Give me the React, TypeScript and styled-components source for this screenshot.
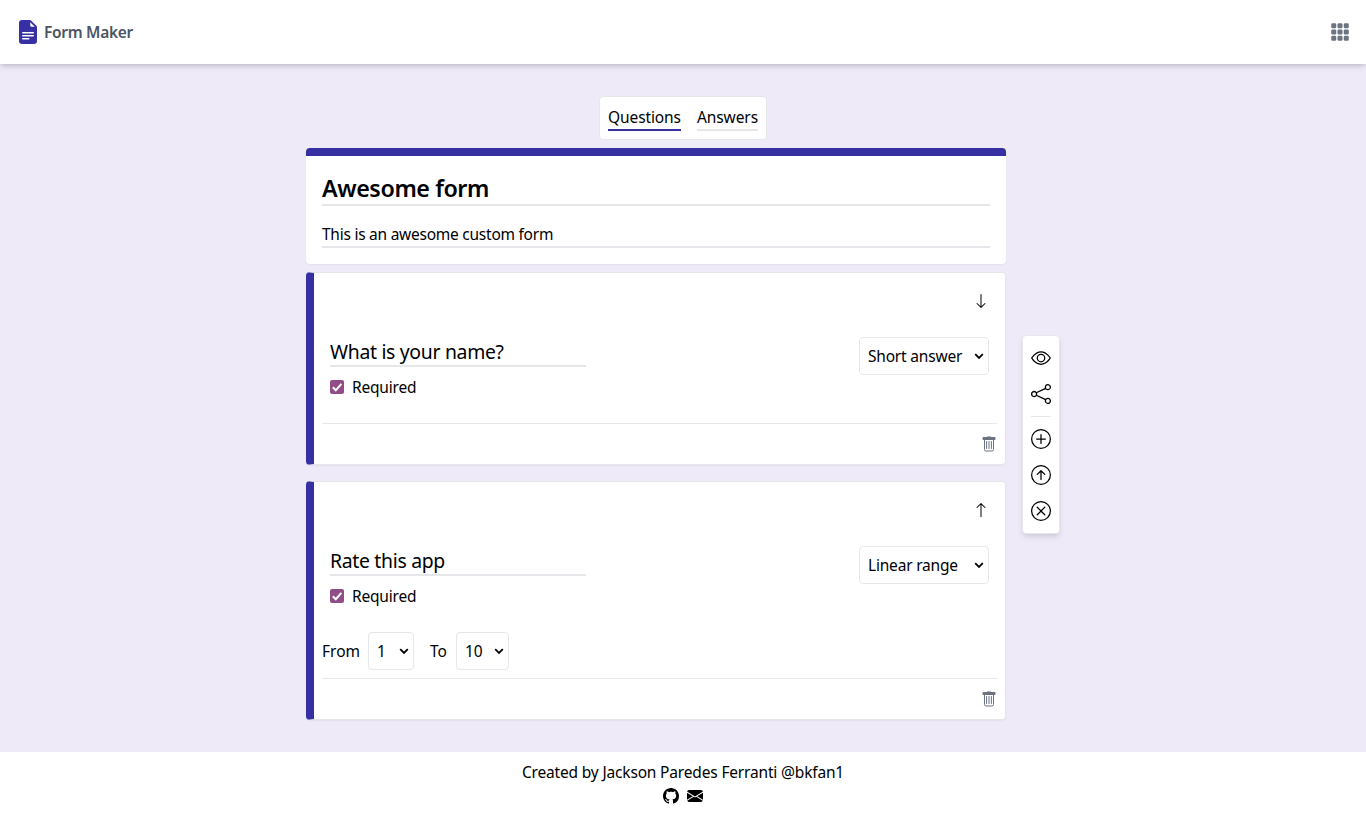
import React from "react";
import styled, { createGlobalStyle } from "styled-components";
import {
  BsArrowDown,
  BsArrowUp,
  BsArrowUpCircle,
  BsEnvelopeFill,
  BsEye,
  BsFileEarmarkTextFill,
  BsGithub,
  BsGrid3X3GapFill,
  BsPlusCircle,
  BsShare,
  BsXCircle,
} from "react-icons/bs";

const indigo = "#3730a3";
const line = "#e5e7eb";
const gray = "#6b7280";

const GlobalStyle = createGlobalStyle`
  *, *::before, *::after { box-sizing: border-box; }
  body {
    margin: 0;
    font-family: "Noto Sans", "Open Sans", sans-serif;
    font-size: 15.5px;
    line-height: 24px;
    color: #000;
    background: #fff;
  }
  h1, h2, p { margin: 0; font-size: inherit; font-weight: inherit; }
  svg { display: block; flex-shrink: 0; }
`;

const Page = styled.div`
  display: flex;
  flex-direction: column;
  min-height: 816px;
`;

const Header = styled.header`
  position: relative;
  display: flex;
  align-items: center;
  justify-content: space-between;
  height: 64px;
  padding: 0 16px;
  background: #fff;
  color: ${gray};
  box-shadow: 0 4px 6px -1px rgba(0, 0, 0, 0.1), 0 2px 4px -1px rgba(0, 0, 0, 0.12);
`;

const Brand = styled.div`
  display: flex;
  align-items: center;
  gap: 4px;
  color: ${indigo};
`;

const Text = styled.span<{ $tracking?: number }>`
  letter-spacing: ${(p) => p.$tracking ?? -0.2}px;
  white-space: nowrap;
`;

const BrandName = styled(Text)`
  font-weight: 600;
  color: #4b5563;
`;

const Main = styled.main`
  flex: 1;
  display: flex;
  flex-direction: column;
  align-items: center;
  gap: 8px;
  padding: 32px 0;
  background: #eeeaf8;
`;

const Tabs = styled.nav`
  display: flex;
  gap: 16px;
  padding: 8px;
  background: #fff;
  border: 1px solid ${line};
  border-radius: 4px;
`;

const Tab = styled.div<{ $active?: boolean; $width: number }>`
  width: ${(p) => p.$width}px;
  border-bottom: 2px solid ${(p) => (p.$active ? indigo : line)};
`;

const Workspace = styled.div`
  display: flex;
  align-items: center;
  gap: 16px;
`;

const FormColumn = styled.div`
  display: flex;
  flex-direction: column;
  width: 700px;
`;

const TitleCard = styled.section`
  display: flex;
  flex-direction: column;
  gap: 16px;
  padding: 16px;
  margin-bottom: 8px;
  background: #fff;
  border-top: 8px solid ${indigo};
  border-radius: 4px;
  box-shadow: 0 1px 2px rgba(0, 0, 0, 0.05);
`;

const FormTitle = styled.h1`
  padding-top: 1px;
  border-bottom: 2px solid ${line};
  font-size: 23.3px;
  line-height: 31px;
  font-weight: 600;
`;

const FormDescription = styled.p`
  border-bottom: 2px solid ${line};
`;

const QuestionCard = styled.section`
  padding: 8px;
  background: #fff;
  border: 1px solid ${line};
  border-left: 8px solid ${indigo};
  border-radius: 4px;
  box-shadow: 0 1px 2px rgba(0, 0, 0, 0.05);

  & + & {
    margin-top: 16px;
  }
`;

const QuestionBody = styled.div`
  display: flex;
  flex-direction: column;
  padding: 8px;
`;

const MoveRow = styled.div`
  display: flex;
  align-items: center;
  justify-content: flex-end;
  height: 24px;
  margin-bottom: 24px;
`;

const QuestionRow = styled.div`
  display: flex;
  align-items: flex-start;
  justify-content: space-between;
`;

const QuestionName = styled.h2`
  width: 256px;
  padding-top: 2px;
  border-bottom: 2px solid ${line};
  font-size: 19.4px;
  line-height: 26px;
`;

const SelectBox = styled.div<{ $width: number }>`
  display: grid;
  align-items: center;
  width: ${(p) => p.$width}px;
  height: 38px;

  & > * {
    grid-area: 1 / 1;
  }
`;

const NativeSelect = styled.select`
  appearance: none;
  width: 100%;
  height: 100%;
  margin: 0;
  padding: 0 8px;
  border: 1px solid ${line};
  border-radius: 4px;
  background: #fff;
  color: #000;
  font-family: inherit;
  font-size: inherit;
  letter-spacing: -0.2px;
`;

const Chevron = styled.svg`
  justify-self: end;
  margin-right: 5px;
  pointer-events: none;
`;

const RequiredLabel = styled.label`
  display: flex;
  align-items: center;
  gap: 8px;
`;

const CheckMark = styled.svg`
  border-radius: 2px;
  background: #914d88;
`;

const AnswerArea = styled.div`
  display: flex;
  align-items: center;
  gap: 16px;
  padding-top: 16px;
`;

const RangeField = styled.label`
  display: flex;
  align-items: center;
  gap: 8px;
  padding-bottom: 8px;
`;

const RangeName = styled(Text)<{ $width: number }>`
  width: ${(p) => p.$width}px;
`;

const CardFooter = styled.div`
  display: flex;
  align-items: center;
  justify-content: flex-end;
  height: 33px;
  padding-top: 8px;
  border-top: 1px solid ${line};
  color: ${gray};
`;

const Toolbar = styled.aside`
  display: flex;
  flex-direction: column;
  padding: 4px 0;
  margin-top: 1px;
  background: #fff;
  border: 1px solid ${line};
  border-radius: 4px;
  box-shadow: 0 4px 6px -1px rgba(0, 0, 0, 0.1), 0 2px 4px -1px rgba(0, 0, 0, 0.06);
`;

const Tool = styled.div`
  padding: 8px;
`;

const Divider = styled.div`
  height: 1px;
  margin: 4px 8px;
  background: ${line};
`;

const Footer = styled.footer`
  display: flex;
  flex-direction: column;
  align-items: center;
  height: 64px;
  padding: 8px;
`;

const FooterLinks = styled.div`
  display: flex;
  align-items: center;
  gap: 8px;
  height: 24px;
`;

function TrashIcon() {
  return (
    <svg width="16" height="16" viewBox="0 0 16 16" fill="none" stroke="currentColor">
      <path d="M6 .5h4V1h3.5a1 1 0 0 1 1 1v1a1 1 0 0 1-1 1h-11a1 1 0 0 1-1-1V2a1 1 0 0 1 1-1H6z" fill="currentColor" stroke="none" />
      <path d="M3.5 4v9.5A1.5 1.5 0 0 0 5 15h6a1.5 1.5 0 0 0 1.5-1.5V4" />
      <path d="M5.6 5.5v7M8 5.5v7M10.4 5.5v7" strokeLinecap="round" />
    </svg>
  );
}

function Select({ value, width }: { value: string; width: number }) {
  return (
    <SelectBox $width={width}>
      <NativeSelect defaultValue={value}>
        <option>{value}</option>
      </NativeSelect>
      <Chevron width="10" height="8" viewBox="0 0 10 8" fill="none" stroke="#000" strokeWidth="1.8">
        <path d="M1.2 2.2 5 6l3.8-3.8" />
      </Chevron>
    </SelectBox>
  );
}

type QuestionProps = {
  name: string;
  type: string;
  move: React.ReactNode;
  children?: React.ReactNode;
};

function Question({ name, type, move, children }: QuestionProps) {
  return (
    <QuestionCard>
      <QuestionBody>
        <MoveRow>{move}</MoveRow>
        <QuestionRow>
          <QuestionName>
            <Text $tracking={-0.31}>{name}</Text>
          </QuestionName>
          <Select width={130} value={type} />
        </QuestionRow>
        <RequiredLabel>
          <CheckMark width="14" height="14" viewBox="0 0 14 14" fill="none" stroke="#fff" strokeWidth="2">
            <path d="m2.8 7.2 3 3L11.4 3.8" />
          </CheckMark>
          <Text>Required</Text>
        </RequiredLabel>
      </QuestionBody>
      <AnswerArea>{children}</AnswerArea>
      <CardFooter>
        <TrashIcon />
      </CardFooter>
    </QuestionCard>
  );
}

export default function App() {
  return (
    <Page>
      <GlobalStyle />
      <Header>
        <Brand>
          <BsFileEarmarkTextFill size={24} />
          <BrandName $tracking={-0.3}>Form Maker</BrandName>
        </Brand>
        <BsGrid3X3GapFill size={20} />
      </Header>
      <Main>
        <Tabs>
          <Tab $active $width={73}>
            <Text $tracking={-0.1}>Questions</Text>
          </Tab>
          <Tab $width={61}>
            <Text $tracking={-0.1}>Answers</Text>
          </Tab>
        </Tabs>
        <Workspace>
          <FormColumn>
            <TitleCard>
              <FormTitle>
                <Text $tracking={-0.42}>Awesome form</Text>
              </FormTitle>
              <FormDescription>
                <Text $tracking={-0.25}>This is an awesome custom form</Text>
              </FormDescription>
            </TitleCard>
            <Question name="What is your name?" type="Short answer" move={<BsArrowDown size={16} />} />
            <Question name="Rate this app" type="Linear range" move={<BsArrowUp size={16} />}>
              <RangeField>
                <RangeName $width={38} $tracking={0}>From</RangeName>
                <Select width={46} value="1" />
              </RangeField>
              <RangeField>
                <RangeName $width={18} $tracking={0}>To</RangeName>
                <Select width={53} value="10" />
              </RangeField>
            </Question>
          </FormColumn>
          <Toolbar>
            <Tool><BsEye size={20} /></Tool>
            <Tool><BsShare size={20} /></Tool>
            <Divider />
            <Tool><BsPlusCircle size={20} /></Tool>
            <Tool><BsArrowUpCircle size={20} /></Tool>
            <Tool><BsXCircle size={20} /></Tool>
          </Toolbar>
        </Workspace>
      </Main>
      <Footer>
        <Text $tracking={-0.17}>Created by Jackson Paredes Ferranti @bkfan1</Text>
        <FooterLinks>
          <BsGithub size={16} />
          <BsEnvelopeFill size={16} />
        </FooterLinks>
      </Footer>
    </Page>
  );
}
